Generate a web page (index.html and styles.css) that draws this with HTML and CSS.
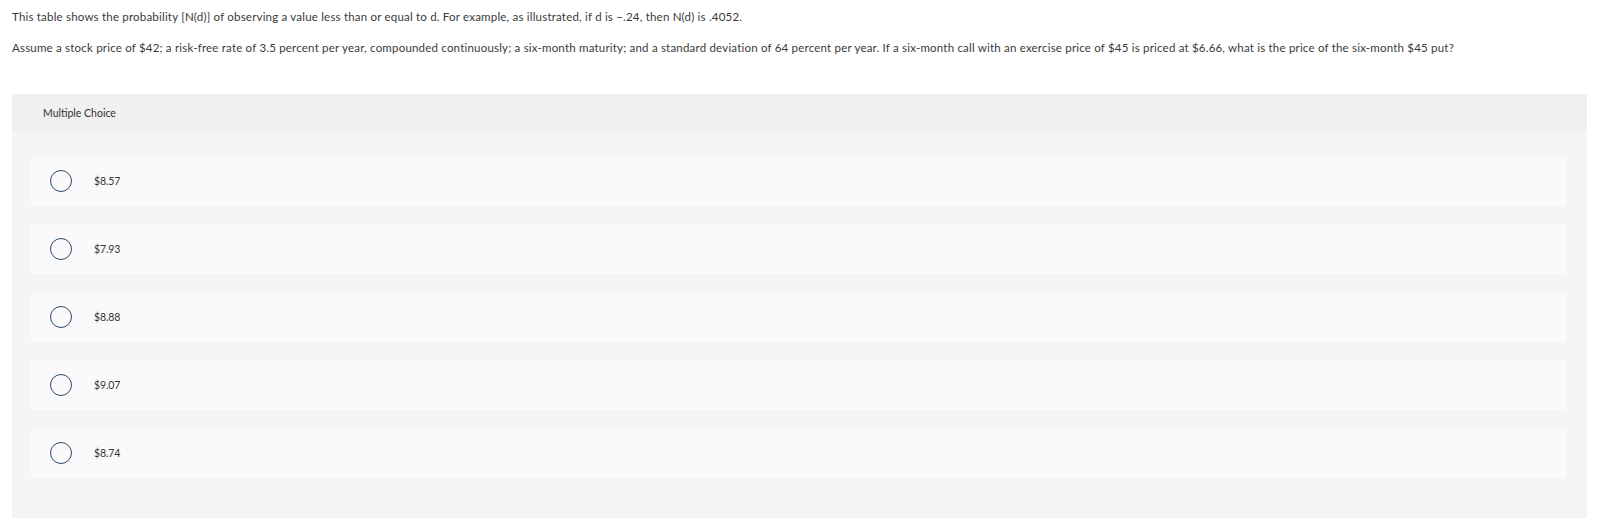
FILE: index.html
```html
<!DOCTYPE html>
<html lang="en">
<head>
<meta charset="utf-8">
<title>Multiple Choice</title>
<link rel="stylesheet" href="styles.css">
</head>
<body>
<div class="question">
  <p class="q-line">This table shows the probability [N(d)] of observing a value less than or equal to d. For example, as illustrated, if d is −.24, then N(d) is .4052.</p>
  <p class="q-line">Assume a stock price of $42; a risk-free rate of 3.5 percent per year, compounded continuously; a six-month maturity; and a standard deviation of 64 percent per year. If a six-month call with an exercise price of $45 is priced at $6.66, what is the price of the six-month $45 put?</p>
</div>
<div class="panel">
  <div class="panel-header">Multiple Choice</div>
  <div class="options">
    <div class="option"><span class="radio"></span><span class="label">$8.57</span></div>
    <div class="option"><span class="radio"></span><span class="label">$7.93</span></div>
    <div class="option"><span class="radio"></span><span class="label">$8.88</span></div>
    <div class="option"><span class="radio"></span><span class="label">$9.07</span></div>
    <div class="option"><span class="radio"></span><span class="label">$8.74</span></div>
  </div>
</div>
</body>
</html>
```

FILE: styles.css
```css
html, body {
  margin: 0;
  padding: 0;
  background: #ffffff;
}
body {
  font-family: Lato, "Liberation Sans", sans-serif;
  color: #333333;
  font-size: 11px;
}
.question {
  padding: 9px 0 0 12px;
}
.q-line {
  margin: 0 0 15px 0;
  line-height: 16px;
  font-size: 11.5px;
  letter-spacing: 0.2px;
  color: #3a3a3a;
}
.panel {
  margin: 38px 14px 0 12px;
  background: #f5f5f5;
  padding-bottom: 40px;
}
.panel-header {
  height: 38px;
  background: #f0f0f0;
  display: flex;
  align-items: center;
  padding-left: 31px;
  font-size: 10.5px;
  color: #333;
}
.options {
  display: flex;
  flex-direction: column;
  gap: 18px;
  padding: 24px 21px 0 19px;
}
.option {
  height: 50px;
  background: #fafafa;
  display: flex;
  align-items: center;
  padding-left: 19px;
}
.radio {
  width: 20px;
  height: 20px;
  border: 1.3px solid #2e4a6a;
  border-radius: 50%;
  box-sizing: content-box;
  flex: none;
}
.label {
  margin-left: 22px;
  font-size: 10.5px;
  color: #333;
  letter-spacing: -0.1px;
}
```
